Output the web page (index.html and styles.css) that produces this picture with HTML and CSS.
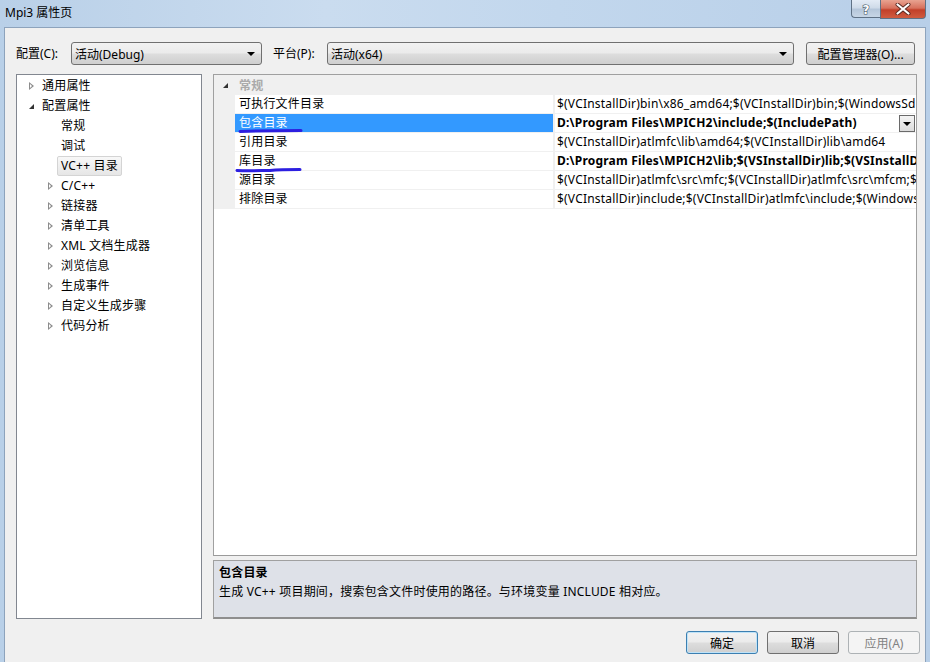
FILE: index.html
```html
<!DOCTYPE html>
<html lang="zh-CN">
<head>
<meta charset="utf-8">
<title>Mpi3 属性页</title>
<link rel="stylesheet" href="styles.css">
</head>
<body>
<div class="window">
  <div class="titlebar">
    <div class="title">Mpi3 属性页</div>
    <div class="caption-btns">
      <div class="cap-btn help">
        <svg width="14" height="14" viewBox="0 0 14 14"><text x="7" y="12" text-anchor="middle" class="qmark">?</text></svg>
      </div>
      <div class="cap-btn close">
        <svg width="16" height="12" viewBox="0 0 16 12"><path d="M2.5 1.5 L13.5 10.5 M13.5 1.5 L2.5 10.5" stroke="#5a2a22" stroke-width="4" stroke-linecap="round"/><path d="M2.5 1.5 L13.5 10.5 M13.5 1.5 L2.5 10.5" stroke="#fff" stroke-width="2.2" stroke-linecap="round"/></svg>
      </div>
    </div>
  </div>
  <div class="client">
    <div class="toolbar">
      <label class="lbl lbl-config">配置(C):</label>
      <div class="combo combo-config"><span>活动(Debug)</span><i class="combo-arrow"></i></div>
      <label class="lbl lbl-platform">平台(P):</label>
      <div class="combo combo-platform"><span>活动(x64)</span><i class="combo-arrow"></i></div>
      <button class="btn btn-manager">配置管理器(O)...</button>
    </div>
    <div class="main">
      <div class="tree">
        <div class="node lvl0"><i class="tri-closed"></i><span>通用属性</span></div>
        <div class="node lvl0"><i class="tri-open"></i><span>配置属性</span></div>
        <div class="node lvl1 leaf"><span>常规</span></div>
        <div class="node lvl1 leaf"><span>调试</span></div>
        <div class="node lvl1 leaf"><span class="sel">VC++ 目录</span></div>
        <div class="node lvl1"><i class="tri-closed"></i><span>C/C++</span></div>
        <div class="node lvl1"><i class="tri-closed"></i><span>链接器</span></div>
        <div class="node lvl1"><i class="tri-closed"></i><span>清单工具</span></div>
        <div class="node lvl1"><i class="tri-closed"></i><span>XML 文档生成器</span></div>
        <div class="node lvl1"><i class="tri-closed"></i><span>浏览信息</span></div>
        <div class="node lvl1"><i class="tri-closed"></i><span>生成事件</span></div>
        <div class="node lvl1"><i class="tri-closed"></i><span>自定义生成步骤</span></div>
        <div class="node lvl1"><i class="tri-closed"></i><span>代码分析</span></div>
      </div>
      <div class="right">
        <div class="grid">
          <div class="cat"><i class="tri-open cat-tri"></i><span>常规</span></div>
          <div class="prow"><div class="pname">可执行文件目录</div><div class="pval">$(VCInstallDir)bin\x86_amd64;$(VCInstallDir)bin;$(WindowsSdkDir)bin\NETFX 4.0 Tools\x64;$(WindowsSdkDir)bin\x64</div></div>
          <div class="prow selrow"><div class="pname">包含目录</div><div class="pval bold">D:\Program Files\MPICH2\include;$(IncludePath)<span class="cell-drop"><i></i></span></div></div>
          <div class="prow"><div class="pname">引用目录</div><div class="pval">$(VCInstallDir)atlmfc\lib\amd64;$(VCInstallDir)lib\amd64</div></div>
          <div class="prow"><div class="pname">库目录</div><div class="pval bold">D:\Program Files\MPICH2\lib;$(VSInstallDir)lib;$(VSInstallDir)lib\amd64</div></div>
          <div class="prow"><div class="pname">源目录</div><div class="pval">$(VCInstallDir)atlmfc\src\mfc;$(VCInstallDir)atlmfc\src\mfcm;$(VCInstallDir)atlmfc\src\atl</div></div>
          <div class="prow"><div class="pname">排除目录</div><div class="pval">$(VCInstallDir)include;$(VCInstallDir)atlmfc\include;$(WindowsSdkDir)include</div></div>
        </div>
        <div class="desc">
          <div class="desc-title">包含目录</div>
          <div class="desc-text">生成 VC++ 项目期间，搜索包含文件时使用的路径。与环境变量 INCLUDE 相对应。</div>
        </div>
      </div>
    </div>
    <div class="actions">
      <button class="btn dlg-btn default">确定</button>
      <button class="btn dlg-btn">取消</button>
      <button class="btn dlg-btn disabled">应用(A)</button>
    </div>
  </div>
</div>
<svg class="annot" width="930" height="662" viewBox="0 0 930 662">
  <path d="M240 131.5 C255 131 275 130.5 301 130.5" stroke="#2d1fe0" stroke-width="3" fill="none" stroke-linecap="round"/>
  <path d="M237 170.5 C250 171 262 170.5 270 170.5 C280 169.5 290 169.5 300 169.5" stroke="#2d1fe0" stroke-width="3" fill="none" stroke-linecap="round"/>
</svg>
</body>
</html>
```
FILE: styles.css
```css
* { box-sizing: border-box; }
body {
  margin: 0;
  width: 930px;
  height: 662px;
  overflow: hidden;
  position: relative;
  background: linear-gradient(90deg, #b9d0e8 0%, #cadcef 35%, #c2d7ed 60%, #b8cfe8 100%);
  font-family: "Noto Sans", "Noto Sans CJK SC", sans-serif;
  font-size: 12px;
  letter-spacing: 0.2px;
  color: #000;
}
.window { display: flex; flex-direction: column; height: 662px; }
.titlebar { height: 27px; display: flex; align-items: flex-start; flex-shrink: 0; }
.title { padding: 5px 0 0 5px; font-size: 12px; line-height: 16px; letter-spacing: 0; }
.caption-btns { margin-left: auto; margin-right: 4px; display: flex; }
.cap-btn { display: flex; align-items: center; justify-content: center; border: 1px solid #5f7185; border-top: none; }
.help {
  width: 29px; height: 18px; border-radius: 0 0 0 4px; border-right: none;
  background: linear-gradient(180deg, #e3ebf5 0%, #cfdbe9 45%, #b5c6da 55%, #c7d6e6 100%);
}
.qmark { font: bold 12px "DejaVu Sans", sans-serif; fill: #fff; stroke: #4a5868; stroke-width: 1.2px; paint-order: stroke; }
.close {
  width: 46px; height: 19px; border-radius: 0 0 4px 0;
  background: linear-gradient(180deg, #e8a391 0%, #d7715d 45%, #c2402a 55%, #d05c40 100%);
}
.client {
  flex: 1;
  margin: 0 4px;
  background: #f0f0f0;
  border: 1px solid #8da3bc;
  border-bottom: none;
  padding: 14px 8px 0 11px;
  display: flex;
  flex-direction: column;
}
.toolbar { display: flex; align-items: center; height: 23px; letter-spacing: 0; }
.lbl { line-height: 23px; }
.lbl-config { width: 55px; }
.lbl-platform { width: 54px; margin-left: 11px; }
.combo {
  height: 23px;
  border: 1px solid #707070;
  border-radius: 3px;
  background: linear-gradient(180deg, #f2f2f2 0%, #ebebeb 48%, #dddddd 52%, #cfcfcf 100%);
  display: flex; align-items: center;
  padding: 0 0 0 3px;
  position: relative;
}
.combo-config { width: 191px; }
.combo-platform { width: 467px; }
.combo span { flex: 1; }
.combo-arrow {
  width: 0; height: 0;
  border-left: 4px solid transparent; border-right: 4px solid transparent; border-top: 4px solid #000;
  margin-right: 6px;
}
.btn {
  font-family: "Noto Sans", "Noto Sans CJK SC", sans-serif;
  font-size: 12px;
  letter-spacing: 0;
  height: 23px;
  border: 1px solid #707070;
  border-radius: 3px;
  background: linear-gradient(180deg, #f2f2f2 0%, #ebebeb 48%, #dddddd 52%, #cfcfcf 100%);
  padding: 0;
  color: #000;
}
.btn-manager { width: 109px; margin-left: 12px; }
.main { display: flex; margin-top: 9px; height: 545px; }
.tree {
  width: 186px;
  border: 1px solid #828790;
  background: #fff;
  padding-top: 1px;
}
.node { height: 20px; display: flex; align-items: center; position: relative; }
.lvl0 { padding-left: 12px; }
.lvl1 { padding-left: 31px; }
.leaf { padding-left: 44px; }
.node i { flex-shrink: 0; }
.tri-closed {
  display: block; width: 0; height: 0;
  border-top: 4.5px solid transparent; border-bottom: 4.5px solid transparent;
  border-left: 5px solid #8c8c8c;
  margin-right: 8px; position: relative;
}
.tri-closed::after {
  content: ""; position: absolute; left: -4px; top: -2.5px;
  border-top: 2.5px solid transparent; border-bottom: 2.5px solid transparent;
  border-left: 2.8px solid #fff;
}
.tri-open {
  display: block; width: 0; height: 0;
  border-left: 5px solid transparent; border-bottom: 5px solid #333;
  margin: 0 8px 0 0;
}
.node span { line-height: 18px; }
.sel {
  margin-left: -4px;
  padding: 0 3px;
  height: 20px; line-height: 18px;
  border: 1px solid #d4d4d4;
  border-radius: 2px;
  background: linear-gradient(180deg, #f8f8f8, #e6e6e6);
}
.right { width: 704px; margin-left: 11px; display: flex; flex-direction: column; }
.grid {
  height: 482px;
  border: 1px solid #a0a0a0;
  border-bottom-color: #9a9a9a;
  background: #fff;
  overflow: hidden;
}
.cat {
  height: 20px; background: #f0f0f0; display: flex; align-items: center;
  padding-left: 9px; color: #aaa; font-weight: bold;
}
.cat-tri { margin-right: 11px !important; }
.prow {
  height: 19px; display: flex;
  border-bottom: 1px solid #f0f0f0;
  border-left: 21px solid #f0f0f0;
}
.pname {
  width: 320px; flex-shrink: 0; padding-left: 4px; line-height: 18px;
  border-right: 2px solid #f0f0f0;
  white-space: nowrap;
}
.pval { flex: 1; padding-left: 2px; line-height: 18px; white-space: nowrap; overflow: hidden; position: relative; }
.bold { font-weight: bold; }
.selrow .pname { background: #3399ff; color: #fff; }
.cell-drop {
  position: absolute; right: 1px; top: 1px;
  width: 16px; height: 17px;
  border: 1px solid #6a6a6a;
  background: linear-gradient(180deg, #f4f4f4, #dcdcdc);
  display: flex; align-items: center; justify-content: center;
}
.cell-drop i {
  width: 0; height: 0;
  border-left: 4px solid transparent; border-right: 4px solid transparent; border-top: 4px solid #000;
}
.desc {
  margin-top: 4px;
  height: 59px;
  border: 1px solid #a0a0a0;
  border-bottom: 2px solid #8e8e8e;
  background: #dee1e8;
  padding: 2px 5px;
}
.desc-title { font-weight: bold; line-height: 19px; }
.desc-text { line-height: 19px; }
.actions { display: flex; justify-content: flex-end; gap: 9px; margin-top: 12px; margin-right: -3px; }
.dlg-btn { width: 72px; }
.default { border-color: #3c7fb1; box-shadow: inset 0 0 0 1px #bfe3f8; }
.disabled { border-color: #adb2b5; background: #f4f4f4; color: #838383; }
.annot { position: absolute; left: 0; top: 0; pointer-events: none; }
```
